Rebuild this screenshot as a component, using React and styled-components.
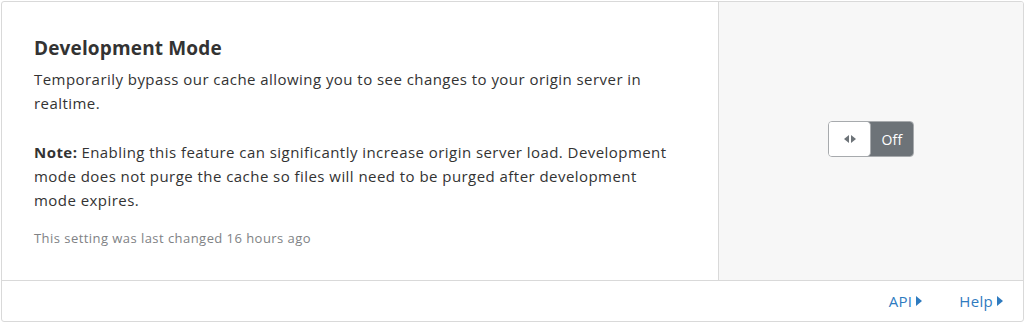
import React from "react";
import styled, { createGlobalStyle } from "styled-components";

const GlobalStyle = createGlobalStyle`
  body {
    margin: 0;
    background: #fff;
    font-family: "Open Sans", "Noto Sans", sans-serif;
    color: #333;
  }
`;

const Page = styled.div`
  padding: 1px;
`;

const Card = styled.section`
  border: 1px solid #d9d9d9;
  border-radius: 3px;
  overflow: hidden;
  background: #fff;
`;

const Body = styled.div`
  display: flex;
  height: 278px;
`;

const Content = styled.div`
  width: 717px;
  padding: 34px 0 0 32px;
  border-right: 1px solid #d9d9d9;
  box-sizing: border-box;
`;

const Title = styled.h3`
  margin: 0;
  font-size: 19px;
  line-height: 24px;
  font-weight: 700;
  letter-spacing: 0.15px;
  color: #333;
`;

const Text = styled.p`
  margin: ${(p) => p.$top || 7}px 0 0;
  width: 640px;
  font-size: 15px;
  line-height: 24px;
  letter-spacing: 0.45px;
  color: #333;
`;

const Strong = styled.strong`
  font-weight: 700;
  margin-right: 4px;
`;

const Meta = styled.p`
  margin: 16px 0 0;
  font-size: 13px;
  line-height: 20px;
  letter-spacing: 0.45px;
  color: #808285;
`;

const Side = styled.div`
  flex: 1;
  background: #f7f7f7;
  display: flex;
  align-items: center;
  justify-content: center;
`;

const Toggle = styled.div`
  display: flex;
  width: 86px;
  height: 36px;
  border: 1px solid #a7aaad;
  border-radius: 4px;
  overflow: hidden;
  box-sizing: border-box;
  margin: -4px 0 0 0;
  cursor: pointer;
`;

const Knob = styled.div`
  width: 42px;
  background: #fff;
  display: flex;
  align-items: center;
  justify-content: center;
  border-radius: 0 4px 4px 0;
  border-right: 1px solid #a7aaad;
  box-sizing: border-box;
  position: relative;
  z-index: 1;
`;

const State = styled.div`
  flex: 1;
  background: #6d7378;
  color: #fff;
  font-size: 14px;
  letter-spacing: 0.3px;
  display: flex;
  align-items: center;
  justify-content: center;
  margin-left: -3px;
  padding-left: 3px;
`;

const Footer = styled.footer`
  height: 40px;
  border-top: 1px solid #d9d9d9;
  display: flex;
  align-items: center;
  justify-content: flex-end;
  gap: 37px;
  padding-right: 20px;
`;

const FooterLink = styled.a`
  display: flex;
  align-items: center;
  gap: 4px;
  color: #2f7bbf;
  font-size: 15px;
  letter-spacing: 0.3px;
  text-decoration: none;
  cursor: pointer;
`;

const Caret = () => (
  <svg width="6" height="10" viewBox="0 0 6 10">
    <path d="M0 0 L6 5 L0 10 Z" fill="#2f7bbf" />
  </svg>
);

const Arrows = () => (
  <svg width="12" height="8" viewBox="0 0 12 8">
    <path d="M5 0 L0 4 L5 8 Z" fill="#6d7378" />
    <path d="M7 0 L12 4 L7 8 Z" fill="#6d7378" />
  </svg>
);

export default function App() {
  return (
    <Page>
      <GlobalStyle />
      <Card>
        <Body>
          <Content>
            <Title>Development Mode</Title>
            <Text>
              Temporarily bypass our cache allowing you to see changes to your
              origin server in realtime.
            </Text>
            <Text $top={25}>
              <Strong>Note:</Strong>Enabling this feature can significantly
              increase origin server load. Development mode does not purge the
              cache so files will need to be purged after development mode
              expires.
            </Text>
            <Meta>This setting was last changed 16 hours ago</Meta>
          </Content>
          <Side>
            <Toggle>
              <Knob>
                <Arrows />
              </Knob>
              <State>Off</State>
            </Toggle>
          </Side>
        </Body>
        <Footer>
          <FooterLink>
            API <Caret />
          </FooterLink>
          <FooterLink>
            Help <Caret />
          </FooterLink>
        </Footer>
      </Card>
    </Page>
  );
}
